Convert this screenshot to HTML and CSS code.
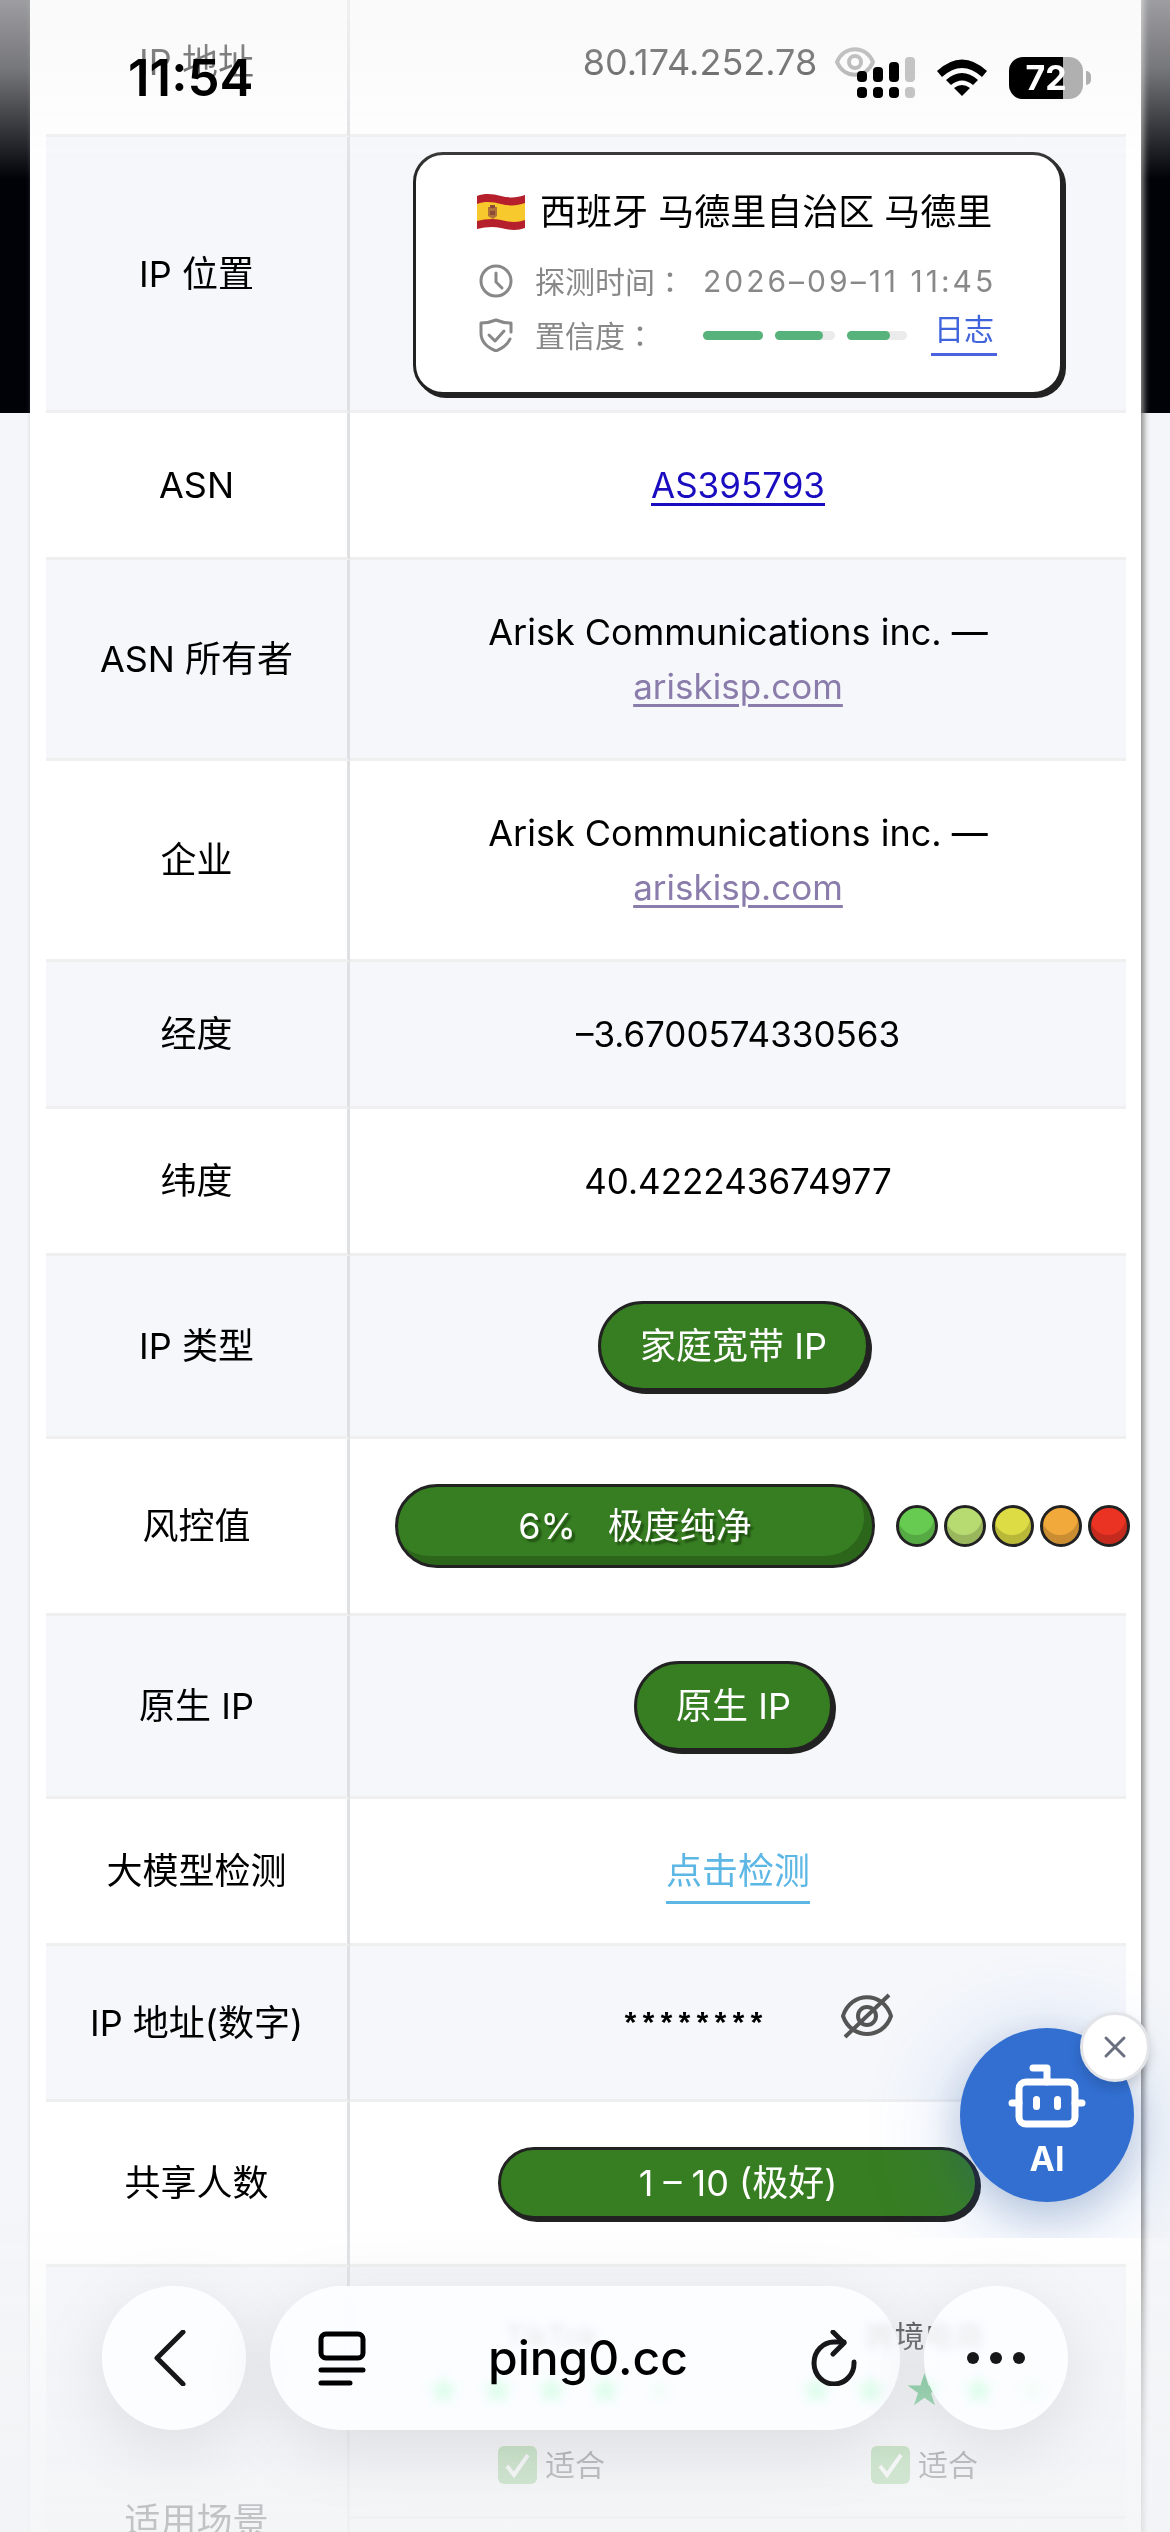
FILE: index.html
```html
<!DOCTYPE html>
<html lang="zh-CN">
<head>
    <meta charset="UTF-8">
    <meta name="viewport" content="width=device-width, initial-scale=1.0">
    <title>ping0.cc</title>
    <link rel="stylesheet" href="styles.css">
</head>
<body>
    <main class="page">
        <div class="card">
            <table class="info">
                <colgroup>
                    <col class="col-label">
                    <col>
                </colgroup>
                <tbody>
                <tr>
                    <th scope="row">IP 地址</th>
                    <td>
                        <div class="ip-line">
                            <span>80.174.252.78</span>
                            <button class="eye-btn" type="button" aria-label="显示">
                                <svg width="40" height="32" viewBox="0 0 40 32" fill="none" stroke="#888" stroke-width="4">
                                    <path d="M2 16C9 -1 31 -1 38 16C31 33 9 33 2 16Z"/>
                                    <circle cx="20" cy="16" r="6"/>
                                </svg>
                            </button>
                        </div>
                    </td>
                </tr>
                <tr>
                    <th scope="row">IP 位置</th>
                    <td class="tight">
                        <div class="location">
                            <div class="place">
                                <svg class="flag" width="50" height="36" viewBox="0 0 50 36">
                                    <path fill="#b5202c" d="M1 2C9 -1 17 0 25 2S41 4 49 1V34C41 37 33 36 25 34S9 33 1 35Z"/>
                                    <path fill="#f8c92c" d="M1 10C9 7 17 8 25 10S41 12 49 9V26C41 29 33 28 25 26S9 25 1 27Z"/>
                                    <path fill="#b0703a" d="M12 13h9v9l-4 3l-5 -3Z"/>
                                    <path fill="#8b4a3a" d="M14 11h5v3h-5zM14 17h5v4h-5z"/>
                                </svg>
                                <span>西班牙 马德里自治区 马德里</span>
                            </div>
                            <div class="meta">
                                <svg width="34" height="34" viewBox="0 0 34 34" fill="none" stroke="#888" stroke-width="3" stroke-linecap="round">
                                    <circle cx="17" cy="17" r="15"/>
                                    <path d="M17 9v9l6 6"/>
                                </svg>
                                <span class="meta-label">探测时间<span class="colon" lang="zh-TW">：</span></span>
                                <span class="meta-value">2026–09–11 11:45</span>
                            </div>
                            <div class="meta">
                                <svg width="34" height="34" viewBox="0 0 34 34" fill="none" stroke="#888" stroke-width="3" stroke-linecap="round" stroke-linejoin="round">
                                    <path d="M32 14V5Q24 5 17 2Q10 5 2 5V15Q2 27 17 33Q28 28 31 21"/>
                                    <path d="M10 17l6 6l9 -10"/>
                                </svg>
                                <span class="meta-label">置信度<span class="colon" lang="zh-TW">：</span></span>
                                <span class="bars">
                                    <span class="bar"><i style="width: 100%"></i></span>
                                    <span class="bar"><i style="width: 80%"></i></span>
                                    <span class="bar"><i style="width: 72%"></i></span>
                                </span>
                                <a class="log" href="#">日志</a>
                            </div>
                        </div>
                    </td>
                </tr>
                <tr>
                    <th scope="row">ASN</th>
                    <td><a class="asn" href="#">AS395793</a></td>
                </tr>
                <tr>
                    <th scope="row">ASN 所有者</th>
                    <td>Arisk Communications inc. —<br><a class="visited" href="#">ariskisp.com</a></td>
                </tr>
                <tr>
                    <th scope="row">企业</th>
                    <td>Arisk Communications inc. —<br><a class="visited" href="#">ariskisp.com</a></td>
                </tr>
                <tr>
                    <th scope="row">经度</th>
                    <td class="num">–3.6700574330563</td>
                </tr>
                <tr>
                    <th scope="row">纬度</th>
                    <td class="num">40.422243674977</td>
                </tr>
                <tr>
                    <th scope="row">IP 类型</th>
                    <td><div class="pill-wrap"><span class="pill">家庭宽带 IP</span></div></td>
                </tr>
                <tr>
                    <th scope="row">风控值</th>
                    <td>
                        <div class="risk">
                            <span class="risk-bar"><span>6%</span><span>极度纯净</span></span>
                            <span class="lights">
                                <i class="light green"></i>
                                <i class="light lime"></i>
                                <i class="light yellow"></i>
                                <i class="light orange"></i>
                                <i class="light red"></i>
                            </span>
                        </div>
                    </td>
                </tr>
                <tr>
                    <th scope="row">原生 IP</th>
                    <td><div class="pill-wrap"><span class="pill">原生 IP</span></div></td>
                </tr>
                <tr>
                    <th scope="row">大模型检测</th>
                    <td><a class="check" href="#">点击检测</a></td>
                </tr>
                <tr>
                    <th scope="row">IP 地址(数字)</th>
                    <td>
                        <div class="masked">
                            <span class="stars-text">********</span>
                            <button class="eye-btn" type="button" aria-label="隐藏">
                                <svg width="52" height="48" viewBox="0 0 52 48" fill="none" stroke="#555" stroke-width="4">
                                    <path d="M2 24C10 -1 42 -1 50 24C42 48 10 48 2 24Z"/>
                                    <circle cx="26" cy="24" r="9"/>
                                    <path d="M4 45L48 3"/>
                                </svg>
                            </button>
                        </div>
                    </td>
                </tr>
                <tr>
                    <th scope="row">共享人数</th>
                    <td><div class="pill-wrap"><span class="pill-wide">1 – 10 (极好)</span></div></td>
                </tr>
                <tr>
                    <th class="scene-label" scope="row">适用场景</th>
                    <td class="scene-cell">
                        <div class="scenes">
                            <div class="scene">
                                <span>TikTok</span>
                                <span class="rating">
                                    <i>★</i><i>★</i><i>★</i><i>★</i><i class="off">★</i>
                                </span>
                                <span class="fit">
                                    <svg width="39" height="38" viewBox="0 0 39 38"><rect width="39" height="38" rx="6" fill="#55b24a"/><path d="M9 20l7 9L30 9" fill="none" stroke="#fff" stroke-width="4"/></svg>
                                    适合
                                </span>
                            </div>
                            <div class="scene">
                                <span>跨境电商</span>
                                <span class="rating">
                                    <i>★</i><i>★</i><i>★</i><i>★</i><i class="off">★</i>
                                </span>
                                <span class="fit">
                                    <svg width="39" height="38" viewBox="0 0 39 38"><rect width="39" height="38" rx="6" fill="#55b24a"/><path d="M9 20l7 9L30 9" fill="none" stroke="#fff" stroke-width="4"/></svg>
                                    适合
                                </span>
                            </div>
                        </div>
                    </td>
                </tr>
                </tbody>
            </table>
        </div>
    </main>

    <!-- floating assistant -->
    <div class="assistant">
        <button class="ai-btn" type="button">
            <svg width="84" height="84" viewBox="0 0 24 24" fill="none" stroke="#fff" stroke-width="2" stroke-linecap="round" stroke-linejoin="round">
                <path d="M12 8V4H8"/>
                <rect x="4" y="8" width="16" height="12" rx="2"/>
                <path d="M2 14h2M20 14h2M15 13v2M9 13v2"/>
            </svg>
            <span>AI</span>
        </button>
        <button class="ai-close" type="button" aria-label="关闭">
            <svg width="24" height="24" viewBox="0 0 24 24" fill="none" stroke="#6b7080" stroke-width="3" stroke-linecap="round">
                <path d="M3 3L21 21M21 3L3 21"/>
            </svg>
        </button>
    </div>

    <!-- phone status bar -->
    <header class="status">
        <span class="time">11:54</span>
        <div class="status-icons">
            <svg width="58" height="42" viewBox="0 0 58 42">
                <rect x="0" y="14" width="10" height="11" rx="4"/>
                <rect x="16" y="10" width="10" height="15" rx="4"/>
                <rect x="32" y="5" width="10" height="20" rx="4"/>
                <rect x="48" y="0" width="10" height="25" rx="4" fill="#c4c4c4"/>
                <rect x="0" y="30" width="10" height="11" rx="4"/>
                <rect x="16" y="30" width="10" height="11" rx="4"/>
                <rect x="32" y="30" width="10" height="11" rx="4"/>
                <rect x="48" y="30" width="10" height="11" rx="4" fill="#c4c4c4"/>
            </svg>
            <svg width="52" height="42" viewBox="0 -2 52 42">
                <path d="M1 12Q26 -11 51 12L46 18Q26 0 6 18Z"/>
                <path d="M10 21Q26 7 42 21L37 26Q26 17 15 26Z"/>
                <path d="M18 29Q26 23 34 29L26 37Z"/>
            </svg>
            <span class="battery"><b>72</b></span>
        </div>
    </header>

    <!-- browser toolbar -->
    <nav class="toolbar">
        <button class="glass round back" type="button" aria-label="返回">
            <svg width="34" height="56" viewBox="0 0 34 56" fill="none" stroke="#17171a" stroke-width="5" stroke-linecap="round" stroke-linejoin="round">
                <path d="M30 2L4 28L30 54"/>
            </svg>
        </button>
        <div class="glass address">
            <button class="plain" type="button" aria-label="阅读器">
                <svg width="48" height="56" viewBox="0 0 48 56" fill="none" stroke="#000" stroke-width="5" stroke-linecap="round">
                    <rect x="3" y="4" width="42" height="24" rx="5"/>
                    <path d="M3 40h42M3 53h29"/>
                </svg>
            </button>
            <span class="url">ping0.cc</span>
            <button class="plain" type="button" aria-label="刷新">
                <svg width="48" height="56" viewBox="0 0 48 56" fill="none" stroke="#17171a" stroke-width="5" stroke-linecap="round" stroke-linejoin="round">
                    <path d="M44 32A20 21 0 1 1 24 12H34"/>
                    <path d="M23 2L34 13L23 24"/>
                </svg>
            </button>
        </div>
        <button class="glass round" type="button" aria-label="更多">
            <svg width="60" height="12" viewBox="0 0 60 12" fill="#17171a">
                <circle cx="7" cy="6" r="6"/>
                <circle cx="30" cy="6" r="6"/>
                <circle cx="53" cy="6" r="6"/>
            </svg>
        </button>
    </nav>
</body>
</html>
```
FILE: styles.css
```css
* {
    box-sizing: border-box;
}

html, body {
    margin: 0;
    height: 100%;
    overflow: hidden;
}

body {
    font-family: Inter, "Noto Sans CJK SC", sans-serif;
    font-size: 36px;
    line-height: 54px;
    color: #000;
    background: #f4f6f9;
}

button {
    padding: 0;
    border: 0;
    background: none;
    font: inherit;
    color: inherit;
}

svg {
    display: block;
    flex: none;
}

/* Dark banner behind the top of the card */
.page {
    height: 100%;
    overflow: hidden;
    padding: 0 29px 0 30px;
    background: linear-gradient(#000208, #000208) no-repeat 0 0 / 100% 413px;
}

.card {
    margin-top: -10px;
    padding: 0 15px 0 16px;
    background: #fff;
    box-shadow: 3px 0 6px #8a8a8a;
}

/* Info table */
.info {
    width: 100%;
    table-layout: fixed;
    border-collapse: separate;
    border-spacing: 0;
}

.col-label {
    width: 304px;
}

.info th,
.info td {
    padding: 45px 0;
    border-bottom: 3px solid #efeff0;
    font-weight: 400;
    text-align: center;
}

.info th {
    border-right: 3px solid #dfe0e2;
}

.info td {
    padding-left: 45px;
    padding-right: 45px;
}

.info tr:nth-child(even) {
    background: #f5f7fb;
}

.info td.tight {
    padding-top: 15px;
    padding-bottom: 15px;
}

.num {
    font-size: 35px;
}

.ip-line,
.masked {
    display: flex;
    justify-content: center;
    align-items: center;
}

.ip-line {
    gap: 18px;
    padding-right: 18px;
}

.masked {
    height: 63px;
    gap: 75px;
    padding-left: 38px;
}

.masked .eye-btn {
    padding-bottom: 14px;
}

.stars-text {
    padding-top: 6px;
    font: bold 30px/36px "Liberation Mono", monospace;
}

/* Location box */
.location {
    width: 650px;
    height: 243px;
    margin: 0 auto;
    padding: 27px 60px 0;
    border: 3px solid #222;
    border-radius: 30px;
    background: #fff;
    box-shadow: 3px 3px 0 #222;
    text-align: left;
}

.place {
    display: flex;
    align-items: center;
    gap: 14px;
    height: 60px;
    margin-bottom: 12px;
    white-space: nowrap;
}

.meta {
    display: flex;
    align-items: center;
    height: 54px;
    padding-left: 3px;
    font-size: 30px;
    color: #888;
    white-space: nowrap;
}

.meta-label {
    width: 168px;
    margin-left: 22px;
}

.colon {
    font-family: "Noto Sans CJK TC", sans-serif;
}

.meta-value {
    letter-spacing: 3px;
}

.bars {
    display: flex;
    gap: 12px;
    margin-right: 24px;
}

.bar {
    width: 60px;
    height: 9px;
    border-radius: 5px;
    background: #ebebeb;
}

.bar i {
    display: block;
    height: 100%;
    border-radius: 5px;
    background: #57b37b;
}

.log {
    margin-bottom: 6px;
    padding: 0 3px 3px;
    border-bottom: 3px solid #4a63dc;
    line-height: 42px;
    color: #3f64dc;
    text-decoration: none;
}

/* Links */
.asn {
    color: #1a0dc0;
}

.visited {
    color: #8a7cab;
}

.asn,
.visited {
    font-size: 35px;
    text-decoration-thickness: 3px;
    text-underline-offset: 5px;
}

.check {
    padding-bottom: 8px;
    border-bottom: 3px solid #5cb7e5;
    color: #5cb7e5;
    text-decoration: none;
}

/* Pills */
.pill-wrap {
    display: flex;
    justify-content: center;
}

.pill,
.pill-wide,
.risk-bar {
    border: 3px solid #222;
    background: #377e22;
    color: #fff;
    white-space: nowrap;
}

.pill {
    height: 90px;
    margin-right: 9px;
    padding: 15px 39px;
    border-radius: 45px;
    box-shadow: 3px 3px 0 #222;
}

.pill-wide {
    width: 480px;
    height: 72px;
    padding: 6px 0;
    border-radius: 36px;
    box-shadow: 3px 3px 0 #222;
}

.risk {
    display: flex;
    align-items: center;
    gap: 21px;
}

.risk-bar {
    flex: none;
    display: flex;
    justify-content: center;
    align-items: center;
    gap: 32px;
    width: 480px;
    height: 84px;
    border-radius: 42px;
    box-shadow: inset -8px -9px 0 #2b661a;
    text-shadow: 3px 3px 2px #205012;
}

.lights {
    display: flex;
    gap: 6px;
}

.light {
    flex: none;
    width: 42px;
    height: 42px;
    border: 3px solid #222;
    border-radius: 50%;
    box-shadow: inset -1px -9px 0 rgba(0, 0, 0, 0.16);
}

.green { background: #66cb50; }
.lime { background: #b8db71; }
.yellow { background: #dedc45; }
.orange { background: #f2a93b; }
.red { background: #ea3323; }

/* Usage scenes */
.info th.scene-label {
    height: 510px;
}

.info td.scene-cell {
    padding: 0;
    vertical-align: top;
}

.scenes {
    display: grid;
    grid-template-columns: 1fr 1fr;
    height: 252px;
    padding: 42px 15px 0;
    border-bottom: 3px solid #e4e5e7;
    font-size: 30px;
}

.scene {
    display: flex;
    flex-direction: column;
    align-items: center;
}

.rating {
    display: flex;
    height: 54px;
}

.rating i {
    width: 54px;
    font: 44px/54px "DejaVu Sans", sans-serif;
    color: #1fae56;
}

.rating .off {
    color: #bfe3cb;
}

.fit {
    display: flex;
    align-items: center;
    gap: 8px;
    margin-top: 21px;
}

/* Assistant, its glow stops at the edge of the frame */
.assistant {
    position: fixed;
    right: 0;
    bottom: 294px;
    width: 360px;
    height: 360px;
    overflow: hidden;
    pointer-events: none;
}

.ai-btn {
    position: absolute;
    right: 36px;
    bottom: 36px;
    display: flex;
    flex-direction: column;
    align-items: center;
    width: 174px;
    height: 174px;
    padding-top: 26px;
    border-radius: 50%;
    background: #326fd1;
    box-shadow: 0 18px 96px rgba(50, 111, 209, 0.3), 0 12px 36px rgba(30, 50, 90, 0.2);
    color: #fff;
    font-weight: 700;
    font-size: 34px;
    line-height: 42px;
}

.ai-close {
    position: absolute;
    right: 20px;
    bottom: 156px;
    display: flex;
    align-items: center;
    justify-content: center;
    width: 70px;
    height: 70px;
    border: 3px solid #e2e4e8;
    border-radius: 50%;
    background: #fff;
    box-shadow: 0 6px 12px rgba(0, 0, 0, 0.15);
}

/* Status bar */
.status {
    position: fixed;
    inset: 0 0 auto;
    display: flex;
    justify-content: space-between;
    height: 180px;
    padding: 57px 87px 0 128px;
    background: linear-gradient(rgba(247, 247, 248, 0.64), rgba(247, 247, 248, 0.48) 38%, rgba(247, 247, 248, 0));
}

.time {
    font-size: 51px;
    line-height: 42px;
    font-weight: 600;
}

.status-icons {
    display: flex;
    align-items: flex-start;
    gap: 21px;
}

.battery {
    position: relative;
    width: 74px;
    height: 42px;
    border-radius: 14px;
    background: linear-gradient(90deg, #000 54px, #b0b0b0 54px);
    color: #fff;
    text-align: center;
    font-size: 34px;
    line-height: 42px;
}

.battery::after {
    content: "";
    position: absolute;
    left: 77px;
    top: 14px;
    width: 5px;
    height: 14px;
    border-radius: 0 5px 5px 0;
    background: #b0b0b0;
}

/* Browser toolbar */
.toolbar {
    position: fixed;
    inset: auto 0 0;
    display: flex;
    gap: 24px;
    height: 312px;
    padding: 66px 102px 0;
    background: linear-gradient(rgba(243, 244, 246, 0), rgba(243, 244, 246, 0.45) 36%, rgba(243, 244, 246, 0.78) 78%, rgba(243, 244, 246, 0.8));
}

.glass {
    display: flex;
    align-items: center;
    justify-content: center;
    height: 144px;
    border-radius: 72px;
    background: rgba(253, 254, 255, 0.84);
    backdrop-filter: blur(4px) saturate(3);
    box-shadow: 0 18px 72px rgba(0, 0, 0, 0.1);
}

.round {
    flex: none;
    width: 144px;
}

.back {
    padding-right: 8px;
}

.address {
    flex: 1;
    justify-content: space-between;
    padding: 0 42px 0 48px;
}

.url {
    font-size: 48px;
    font-weight: 500;
}
```
